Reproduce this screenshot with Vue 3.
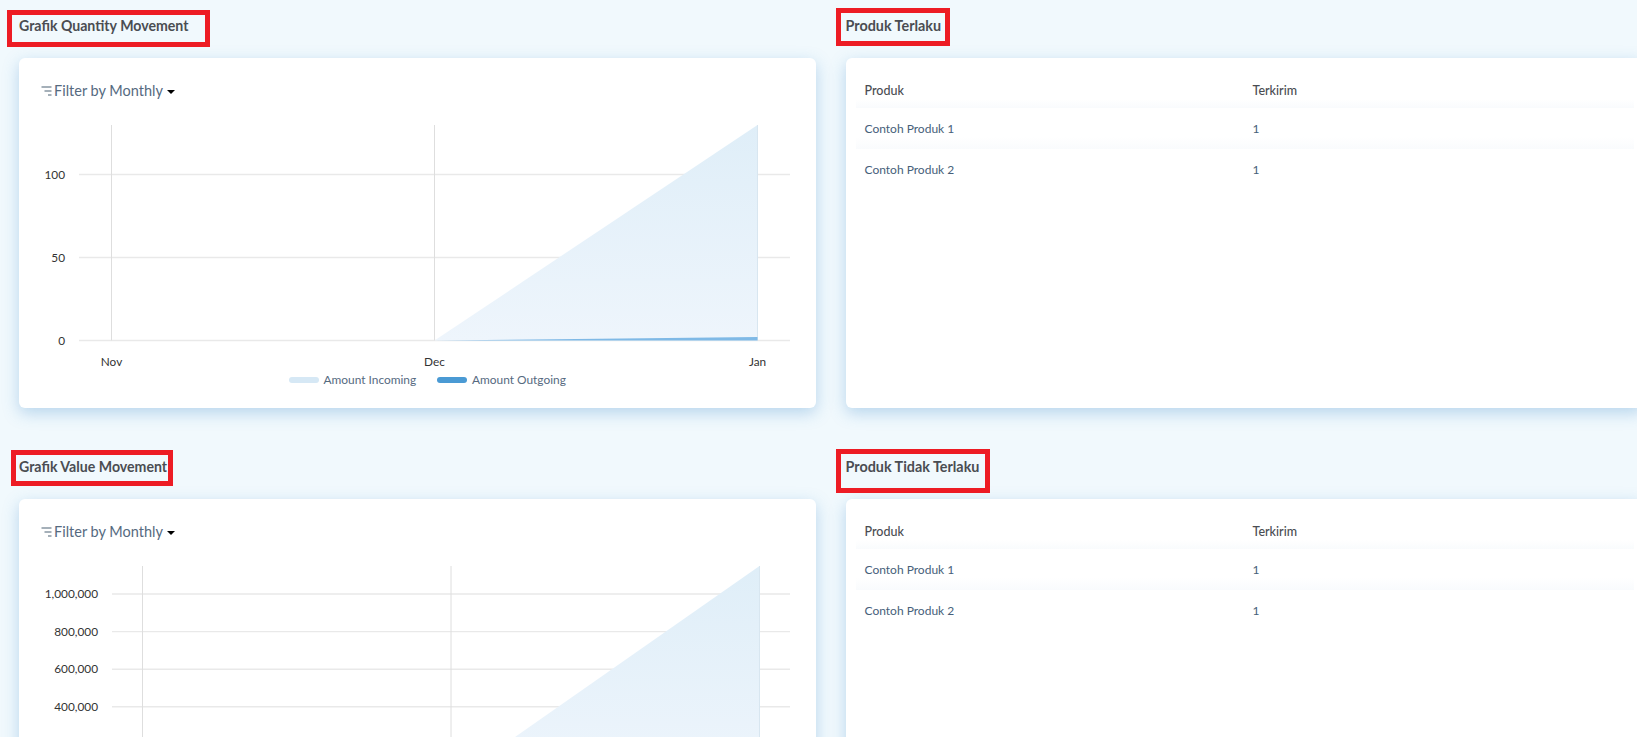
<script setup>
const rows = [
  { name: 'Contoh Produk 1', sent: 1 },
  { name: 'Contoh Produk 2', sent: 1 },
]
const chart1 = {
  id: 'a',
  viewBox: '19 115 797 293',
  height: 293,
  left: 79,
  labelX: 65,
  xs: [111.5, 434.5, 757.5],
  xLabels: ['Nov', 'Dec', 'Jan'],
  top: 125,
  base: 340.5,
  ticks: [
    { y: 174.5, label: '100' },
    { y: 257.5, label: '50' },
    { y: 340.5, label: '0' },
  ],
  peak: 125,
  out: 337,
  legend: true,
}
const chart2 = {
  id: 'b',
  viewBox: '19 556 797 181',
  height: 181,
  left: 112,
  labelX: 98,
  xs: [142.5, 451, 759.5],
  xLabels: [],
  top: 566,
  base: 781.8,
  ticks: [
    { y: 594, label: '1,000,000' },
    { y: 631.6, label: '800,000' },
    { y: 669.2, label: '600,000' },
    { y: 706.8, label: '400,000' },
  ],
  peak: 566,
  out: 781,
  legend: false,
}
const sections = [
  { title: 'Grafik Quantity Movement', mark: 'm1', chart: chart1 },
  { title: 'Grafik Value Movement', mark: 'm2', chart: chart2 },
]
const tables = [
  { title: 'Produk Terlaku', mark: 'm3' },
  { title: 'Produk Tidak Terlaku', mark: 'm4' },
]
</script>

<template>
  <div class="page">
    <div class="column">
      <section v-for="s in sections" :key="s.title" class="section">
        <div class="head">
          <h3 class="title">{{ s.title }}</h3>
          <span class="mark" :class="s.mark"></span>
        </div>
        <div class="card">
          <div class="filter">
            <svg class="filter-icon" width="11" height="10" viewBox="0 0 11 10">
              <path d="M0.5 1h10M3.5 5h7M7 9h3.5" fill="none" stroke="#4d6275" stroke-width="1.1" />
            </svg>
            <span>Filter by Monthly</span>
            <span class="caret"></span>
          </div>
          <svg class="chart" width="797" :height="s.chart.height" :viewBox="s.chart.viewBox">
            <defs>
              <linearGradient :id="'fill-' + s.chart.id" gradientUnits="userSpaceOnUse" x1="0" :y1="s.chart.top" x2="0" :y2="s.chart.base">
                <stop offset="0" stop-color="#dfeef8" />
                <stop offset="1" stop-color="#eef5fc" />
              </linearGradient>
            </defs>
            <line
              v-for="t in s.chart.ticks"
              :key="t.label"
              :x1="s.chart.left"
              x2="790"
              :y1="t.y"
              :y2="t.y"
              class="grid-h"
            />
            <line
              v-for="x in s.chart.xs"
              :key="x"
              :x1="x"
              :x2="x"
              :y1="s.chart.top"
              :y2="s.chart.base"
              class="grid-v"
            />
            <polygon
              :points="`${s.chart.xs[1]},${s.chart.base} ${s.chart.xs[2]},${s.chart.peak} ${s.chart.xs[2]},${s.chart.base}`"
              :fill="`url(#fill-${s.chart.id})`"
            />
            <line
              :x1="s.chart.xs[2]"
              :x2="s.chart.xs[2]"
              :y1="s.chart.peak"
              :y2="s.chart.base"
              class="edge"
            />
            <polygon
              :points="`${s.chart.xs[1]},${s.chart.base} ${s.chart.xs[2]},${s.chart.out} ${s.chart.xs[2]},${s.chart.base}`"
              fill="#7fb9e6"
            />
            <text
              v-for="t in s.chart.ticks"
              :key="'l' + t.label"
              :x="s.chart.labelX"
              :y="t.y + 4"
              text-anchor="end"
              class="axis"
            >{{ t.label }}</text>
            <text
              v-for="(label, i) in s.chart.xLabels"
              :key="'x' + label"
              :x="s.chart.xs[i]"
              :y="s.chart.base + 25"
              text-anchor="middle"
              class="axis"
            >{{ label }}</text>
            <g v-if="s.chart.legend">
              <rect x="289" y="377" width="30" height="6" rx="3" fill="#d6e8f5" />
              <text x="323.5" y="384" class="legend">Amount Incoming</text>
              <rect x="437" y="377" width="30" height="6" rx="3" fill="#4a9ad4" />
              <text x="472" y="384" class="legend">Amount Outgoing</text>
            </g>
          </svg>
        </div>
      </section>
    </div>
    <div class="column">
      <section v-for="t in tables" :key="t.title" class="section">
        <div class="head">
          <h3 class="title title-right">{{ t.title }}</h3>
          <span class="mark" :class="t.mark"></span>
        </div>
        <div class="card table-card">
          <div class="row row-head">
            <span>Produk</span>
            <span>Terkirim</span>
          </div>
          <div v-for="r in rows" :key="r.name" class="row">
            <span>{{ r.name }}</span>
            <span>{{ r.sent }}</span>
          </div>
        </div>
      </section>
    </div>
  </div>
</template>

<style scoped>
.page {
  width: 1637px;
  height: 737px;
  overflow: hidden;
  display: flex;
  gap: 30px;
  padding-left: 19px;
  box-sizing: border-box;
  background: #f1f9fd;
  font-family: Lato, "Liberation Sans", sans-serif;
}
.column {
  flex: 0 0 797px;
  display: flex;
  flex-direction: column;
  gap: 33px;
}
.head {
  position: relative;
  height: 58px;
  display: flex;
  align-items: flex-start;
}
.title {
  margin: 17px 0 0;
  font-size: 14.15px;
  line-height: 18px;
  font-weight: 700;
  color: #4a4d52;
}
.title-right {
  margin-left: -0.5px;
  font-size: 14.35px;
}
.mark {
  position: absolute;
  box-sizing: border-box;
  border: 5px solid #ed1c24;
}
.m1 { left: -12px; top: 10px; width: 203px; height: 37px; }
.m2 { left: -8px; top: 9px; width: 162px; height: 36px; }
.m3 { left: -10px; top: 8px; width: 114px; height: 38px; }
.m4 { left: -10px; top: 8px; width: 154px; height: 44px; }
.card {
  height: 350px;
  flex: none;
  background: #fff;
  border-radius: 6px;
  box-shadow: 0 5px 16px rgba(70, 145, 205, 0.34);
}
.filter {
  display: flex;
  align-items: center;
  box-sizing: border-box;
  height: 57px;
  padding: 8px 0 0 21px;
  color: #566a7f;
  font-size: 14.5px;
}
.filter-icon {
  margin: 1px 2px 0 1px;
}
.caret {
  margin: 3px 0 0 4px;
  border-style: solid;
  border-width: 4px 4px 0;
  border-color: #000 transparent transparent;
}
.chart {
  display: block;
}
.grid-h {
  stroke: #e9e9e9;
  stroke-width: 1.4;
}
.grid-v {
  stroke: #dedede;
  stroke-width: 1;
}
.edge {
  stroke: #d8e6f0;
  stroke-width: 1;
}
.axis {
  font-size: 11.8px;
  fill: #333;
}
.legend {
  font-size: 11.9px;
  fill: #566a7f;
}
.table-card {
  padding: 21px 9px 0 10px;
  box-sizing: border-box;
}
.row {
  display: grid;
  grid-template-columns: 388px 1fr;
  height: 41px;
  align-items: center;
  padding-left: 8.5px;
  font-size: 12px;
  color: #46607a;
  background: linear-gradient(to bottom, #fff 70%, #f9fbfd);
}
.row:last-child {
  background: none;
}
.row-head {
  height: 29px;
  padding-bottom: 6px;
  box-sizing: border-box;
  font-size: 12.5px;
  font-weight: 500;
  color: #4a4d52;
}
</style>
